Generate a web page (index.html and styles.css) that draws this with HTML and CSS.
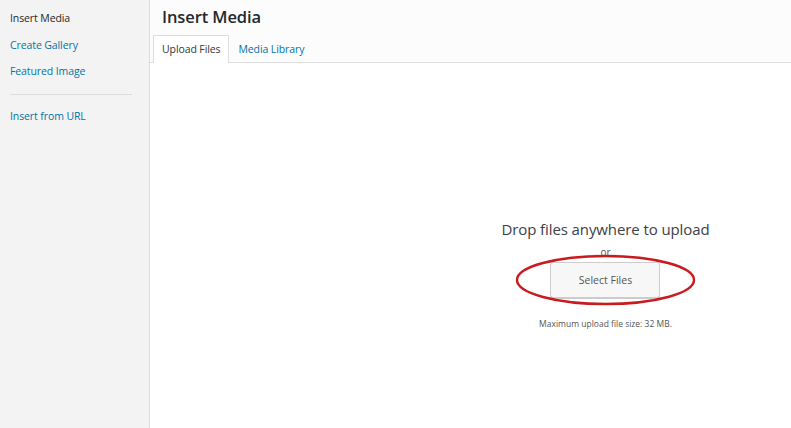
FILE: index.html
```html
<!DOCTYPE html>
<html lang="en">
<head>
  <meta charset="UTF-8">
  <title>Insert Media</title>
  <link rel="stylesheet" href="styles.css">
</head>
<body>
  <div class="media-menu">
    <a class="menu-item active">Insert Media</a>
    <a class="menu-item">Create Gallery</a>
    <a class="menu-item">Featured Image</a>
    <div class="separator"></div>
    <a class="menu-item">Insert from URL</a>
  </div>
  <div class="media-frame">
    <h1 class="frame-title">Insert Media</h1>
    <div class="router">
      <a class="tab active">Upload Files</a>
      <a class="tab">Media Library</a>
    </div>
    <div class="uploader">
      <div class="upload-ui">
        <p class="drop-text">Drop files anywhere to upload</p>
        <p class="or">or</p>
        <div class="select-wrap">
          <button class="select-btn">Select Files</button>
          <svg class="ring" width="181" height="52" viewBox="0 0 181 52">
            <ellipse cx="90.5" cy="26" rx="88.5" ry="24" fill="none" stroke="#c81a1f" stroke-width="2.4"/>
          </svg>
        </div>
        <p class="max-size">Maximum upload file size: 32 MB.</p>
      </div>
    </div>
  </div>
</body>
</html>
```

FILE: styles.css
```css
* { box-sizing: border-box; margin: 0; padding: 0; }
body { font-family: 'Open Sans', 'Noto Sans', sans-serif; display: flex; width: 791px; height: 428px; overflow: hidden; background: #fcfcfc; color: #23282d; }
.media-menu { width: 150px; height: 100%; background: #f3f3f3; border-right: 1px solid #dddddd; padding-top: 5px; display: flex; flex-direction: column; }
.menu-item { display: block; font-size: 10.5px; line-height: 26.5px; padding-left: 10px; color: #0073aa; text-decoration: none; letter-spacing: -0.1px; }
.menu-item.active { color: #23282d; }
.separator { height: 1px; background: #dcdcdc; margin: 9px 17px 8px 10px; }
.media-frame { flex: 1; display: flex; flex-direction: column; }
.frame-title { font-size: 16.5px; font-weight: 600; padding: 5px 0 0 12px; height: 35px; color: #23282d; letter-spacing: -0.1px; }
.router { display: flex; padding-left: 3px; border-bottom: 1px solid #dddddd; height: 28px; }
.tab { font-size: 10.5px; line-height: 26px; padding: 0 8px 0 8px; color: #0073aa; letter-spacing: -0.1px; border: 1px solid transparent; border-bottom: none; }
.tab.active { color: #32373c; background: #fff; border-color: #dddddd; margin-bottom: -1px; height: 28px; }
.uploader { flex: 1; background: #fff; display: flex; justify-content: center; padding-left: 270px; padding-top: 156px; }
.upload-ui { display: flex; flex-direction: column; align-items: center; }
.drop-text { font-size: 15px; line-height: 20px; color: #3c4146; letter-spacing: -0.1px; }
.or { font-size: 10px; line-height: 10px; margin-top: 8px; color: #555; }
.select-wrap { position: relative; width: 181px; height: 52px; display: flex; justify-content: center; align-items: center; margin-top: -3px; }
.select-btn { width: 110px; height: 36px; background: #f7f7f7; border: 1px solid #cccccc; border-radius: 3px; box-shadow: 0 1px 0 #cccccc; font-family: inherit; font-size: 10.5px; color: #555; }
.ring { position: absolute; left: 0; top: 0; }
.max-size { font-size: 8.5px; line-height: 12px; margin-top: 12px; color: #555; }
```
